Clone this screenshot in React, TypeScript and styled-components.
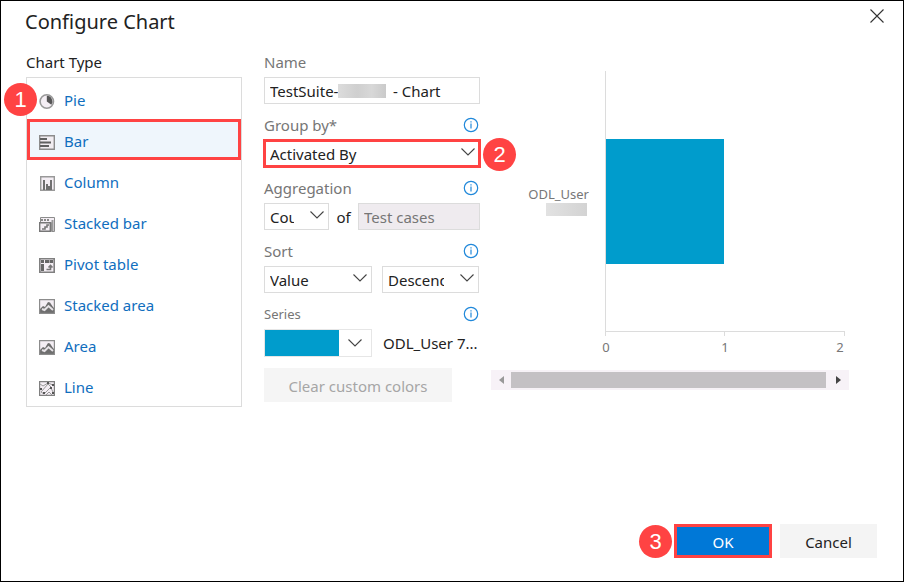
import React, { useState } from "react";
import styled, { createGlobalStyle } from "styled-components";

const RED = "#ff4343";

const Global = createGlobalStyle`
  *, *::before, *::after { box-sizing: border-box; }
  body { margin: 0; background: #fff; }
  body, button, input, select { font-family: "Noto Sans", "Open Sans", sans-serif; font-size: 15px; }
`;

const Dialog = styled.main`
  display: flex;
  flex-direction: column;
  min-height: 100vh;
  border: 1px solid #000;
  background: #fff;
  color: #222;
`;

const Header = styled.header`
  display: flex;
  justify-content: space-between;
  align-items: flex-start;
  padding: 6px 17px 0 24px;
`;

const Title = styled.h1`
  margin: 0;
  font-size: 20px;
  line-height: 30px;
  font-weight: 400;
`;

const CloseButton = styled.button`
  display: flex;
  padding: 1px;
  border: 0;
  background: none;
`;

const Body = styled.div`
  display: flex;
  flex: 1;
  align-items: flex-start;
  padding: 13px 54px 0 25px;
`;

const TypeColumn = styled.section`
  flex: 0 0 216px;
  margin-right: 22px;
`;

const FormColumn = styled.form`
  flex: 0 0 216px;
  min-width: 0;
  display: flex;
  flex-direction: column;
  gap: 9px;
  margin-right: 11px;
`;

const ChartColumn = styled.section`
  flex: 1;
  min-width: 0;
`;

const SectionTitle = styled.h2`
  margin: 0 0 3px;
  font-size: 15px;
  line-height: 24px;
  font-weight: 400;
`;

const TypeList = styled.ul`
  position: relative;
  margin: 0;
  padding: 0;
  list-style: none;
  border: 1px solid #dcdcdc;
`;

const TypeButton = styled.button<{ $selected: boolean }>`
  display: flex;
  align-items: center;
  gap: 9px;
  width: 100%;
  height: 41px;
  padding: 3px 12px 0;
  border: 0;
  background: ${(p) => (p.$selected ? "#eff6fc" : "transparent")};
  outline: ${(p) => (p.$selected ? `3px solid ${RED}` : "none")};
  outline-offset: -3px;
  color: #106ebe;
  text-align: left;
  > svg { margin-top: 3px; }
`;

const Badge = styled.span<{ $floating?: boolean }>`
  display: flex;
  align-items: center;
  justify-content: center;
  flex: none;
  width: 33px;
  height: 33px;
  border-radius: 50%;
  background: ${RED};
  color: #fff;
  font: 22px/33px "Liberation Sans", Arial, sans-serif;
  ${(p) => p.$floating && "position: absolute;"}
`;

const ListBadge = styled(Badge)`
  top: 5px;
  left: -23px;
`;

const FieldBadge = styled(Badge)`
  top: -2px;
  left: calc(100% + 3px);
`;

const Field = styled.div`
  display: flex;
  flex-direction: column;
  gap: 3px;
`;

const LabelRow = styled.div<{ $small?: boolean }>`
  display: flex;
  align-items: center;
  justify-content: space-between;
  height: 24px;
  color: #767676;
  font-size: ${(p) => (p.$small ? "13px" : "15px")};
`;

const InfoButton = styled.button`
  display: flex;
  padding: 0 1px 0 0;
  border: 0;
  background: none;
`;

const ControlRow = styled.div`
  position: relative;
  display: flex;
  align-items: center;
`;

const TextInput = styled.input`
  flex: 1;
  width: 100%;
  min-width: 0;
  height: 27px;
  padding: 0 5px;
  border: 1px solid #dcdcdc;
  background: #fff;
  color: #222;
  &:disabled { background: #efebef; color: #767676; }
`;

const Redaction = styled.span`
  position: absolute;
  left: 74px;
  top: 7px;
  width: 48px;
  height: 14px;
  background: linear-gradient(90deg, #dcdcdc, #cfcfcf 40%, #d8d8d8 70%, #cacaca);
`;

const SelectBox = styled.div<{ $width?: number; $marked?: boolean }>`
  display: grid;
  align-items: center;
  flex: ${(p) => (p.$width ? `0 0 ${p.$width}px` : "1")};
  height: 27px;
  border: 1px solid #dcdcdc;
  outline: ${(p) => (p.$marked ? `3px solid ${RED}` : "none")};
  outline-offset: -2px;
  > * { grid-area: 1 / 1; }
  > svg { justify-self: end; margin: 0 3px 4px 0; pointer-events: none; }
`;

const Select = styled.select`
  width: 100%;
  height: 25px;
  padding: 0 34px 0 5px;
  border: 0;
  appearance: none;
  background: transparent;
  color: #222;
  text-overflow: clip;
`;

const Between = styled.span`
  flex: 1;
  text-align: center;
`;

const ItemsBox = styled.div`
  display: flex;
  flex: 0 0 122px;
`;

const Spacer = styled.span`
  width: 10px;
`;

const ColorButton = styled.button`
  display: flex;
  align-items: center;
  flex: none;
  width: 108px;
  height: 28px;
  padding: 0;
  border: 1px solid #e6e6e6;
  background: #fff;
`;

const Swatch = styled.span`
  width: 74px;
  height: 26px;
  margin-right: 8px;
  background: #009ccc;
`;

const SeriesName = styled.span`
  margin-left: 11px;
  white-space: nowrap;
`;

const ClearButton = styled.button`
  width: 188px;
  height: 34px;
  margin-top: 2px;
  padding: 2px 0 0;
  border: 0;
  background: #f5f5f5;
  color: #a6a6a6;
`;

const ChartSvg = styled.svg`
  display: block;
  width: 100%;
  height: auto;
  font-family: "Noto Sans", sans-serif;
  font-size: 13px;
  fill: #777;
`;

const ScrollTrack = styled.div`
  display: flex;
  align-items: center;
  height: 20px;
  background: #f7f2f7;
`;

const ScrollButton = styled.button`
  display: flex;
  align-items: center;
  justify-content: center;
  width: 20px;
  height: 20px;
  padding: 0;
  border: 0;
  background: none;
`;

const ScrollThumb = styled.div`
  flex: 1;
  height: 16px;
  margin-right: 3px;
  background: #c4c1c4;
`;

const Footer = styled.footer`
  display: flex;
  align-items: center;
  justify-content: flex-end;
  padding: 0 26px 23px;
`;

const ActionButton = styled.button<{ $primary?: boolean }>`
  width: ${(p) => (p.$primary ? "98px" : "97px")};
  height: 34px;
  margin-left: ${(p) => (p.$primary ? "2px" : "8px")};
  padding: 2px 0 0;
  border: 0;
  background: ${(p) => (p.$primary ? "#0078d7" : "#f4f4f4")};
  color: ${(p) => (p.$primary ? "#fff" : "#222")};
  outline: ${(p) => (p.$primary ? `3px solid ${RED}` : "none")};
  outline-offset: -3px;
`;

const Chevron = () => (
  <svg width="16" height="10" viewBox="0 0 16 10" fill="none" stroke="#444" strokeWidth="1.1" aria-hidden="true">
    <path d="M1.5 1.5 8 8l6.5-6.5" />
  </svg>
);

const Info = ({ topic }: { topic: string }) => (
  <InfoButton type="button" aria-label={`About ${topic}`}>
    <svg width="16" height="16" viewBox="0 0 16 16" fill="none" stroke="#2088da" strokeWidth="1.2" aria-hidden="true">
      <circle cx="8" cy="8" r="6.7" />
      <path d="M8 6.5v5M8 4.2v1.2" />
    </svg>
  </InfoButton>
);

const areaShape = (
  <>
    <path fill="#f4eef4" d="M0 0h16v15H0z" />
    <path fill="#6e6e6e" d="M0 11 4 7l2 1 3-5 2 .5L14 8l2 2v5H0z" />
    <path fill="none" stroke="#e6e2e6" strokeWidth="2" d="m3 10 2.500 1L9.500 7l4.500 4" />
    <path fill="none" stroke="#8c8c8c" strokeWidth="1.2" d="M.6.6h14.8v13.8H.6z" />
  </>
);

const shapes: Record<string, React.ReactNode> = {
  Pie: (
    <>
      <circle cx="7.8" cy="7.5" r="6.7" fill="#f4eef4" stroke="#999" strokeWidth="1.6" />
      <path fill="#555" d="M7.8 7.5V1.8a5.7 5.7 0 0 1 4.6 9z" />
    </>
  ),
  Bar: (
    <>
      <path fill="#f1edf1" stroke="#8c8c8c" strokeWidth="1.4" d="M.7.7h14.6v13.6H.7z" />
      <path fill="#606060" d="M1 3h7v2H1zM1 6.5h11v2H1zM1 10h9v2H1z" />
    </>
  ),
  Column: (
    <>
      <path fill="#f4eef4" stroke="#999" strokeWidth="1.4" d="M1.7.7h13.6v13.6H1.7z" />
      <path fill="#707070" d="M4 4h2v10H4zM7 8h2v6H7zM9 10h2v4H9zM11 4h2v10h-2z" />
    </>
  ),
  "Stacked bar": (
    <>
      <path fill="#f4eef4" stroke="#8c8c8c" d="M1.5.5h14v14h-3v-9h-11z" />
      <path stroke="#888" strokeWidth="2" strokeDasharray="2 1" d="M2 3h9" />
      <path stroke="#999" strokeWidth="2" d="M13.500 3v11" />
      <path fill="#f4eef4" stroke="#777" strokeWidth="1.4" d="M.7 5.7h10.600v8.600H.7z" />
      <path fill="none" stroke="#777" strokeWidth="1.6" d="M3 12h3v-2h2V8h2" />
    </>
  ),
  "Pivot table": (
    <>
      <path fill="#f4eef4" stroke="#808080" strokeWidth="1.6" d="M.8.8h14.4v13.4H.8z" />
      <path fill="#666" d="M2 2h3v3H2zM6 2h4v3H6zM10.500 2H14v3h-3.500zM2 6h3v7H2z" />
      <path fill="none" stroke="#777" strokeWidth="1.6" d="M7.500 11.500h4V8M9.500 9.500l2-2 2 2" />
    </>
  ),
  "Stacked area": areaShape,
  Area: areaShape,
  Line: (
    <>
      <path fill="#f4eef4" stroke="#808080" strokeWidth="1.2" d="M.6.6h14.8v13.8H.6z" />
      <path fill="none" stroke="#999" d="m1 3 3 2 5-3 5 2M2 11l7-8 3 3-7 7zM12 7l3 6M7 14l3-3 3 3" />
      <path fill="#555" d="M1 7h2v2H1zM8 1h2v2H8zM13 3h2v2h-2zM4 11h2v2H4zM11 6h2v2h-2zM13 11h2v2h-2z" />
    </>
  ),
};

const chartTypes = ["Pie", "Bar", "Column", "Stacked bar", "Pivot table", "Stacked area", "Area", "Line"];

export default function App() {
  const [type, setType] = useState("Bar");
  return (
    <>
      <Global />
      <Dialog role="dialog" aria-labelledby="dialog-title">
        <Header>
          <Title id="dialog-title">Configure Chart</Title>
          <CloseButton type="button" aria-label="Close">
            <svg width="16" height="16" viewBox="0 0 16 16" stroke="#333" strokeWidth="1.1">
              <path d="m1.5 1.5 13 13M14.5 1.5l-13 13" />
            </svg>
          </CloseButton>
        </Header>
        <Body>
          <TypeColumn>
            <SectionTitle>Chart Type</SectionTitle>
            <TypeList>
              {chartTypes.map((name) => (
                <li key={name}>
                  <TypeButton
                    type="button"
                    $selected={name === type}
                    aria-pressed={name === type}
                    onClick={() => setType(name)}
                  >
                    <svg width="16" height="16" viewBox="0 0 16 16" aria-hidden="true">
                      {shapes[name]}
                    </svg>
                    {name}
                  </TypeButton>
                </li>
              ))}
              <ListBadge as="li" $floating>1</ListBadge>
            </TypeList>
          </TypeColumn>

          <FormColumn onSubmit={(e) => e.preventDefault()}>
            <Field>
              <LabelRow><label htmlFor="name">Name</label></LabelRow>
              <ControlRow>
                <TextInput id="name" defaultValue={"TestSuite-" + " ".repeat(13) + " - Chart"} />
                <Redaction />
              </ControlRow>
            </Field>
            <Field>
              <LabelRow><label htmlFor="group">Group by*</label><Info topic="group by" /></LabelRow>
              <ControlRow>
                <SelectBox $marked>
                  <Select id="group"><option>Activated By</option></Select>
                  <Chevron />
                </SelectBox>
                <FieldBadge $floating>2</FieldBadge>
              </ControlRow>
            </Field>
            <Field>
              <LabelRow><label htmlFor="aggregation">Aggregation</label><Info topic="aggregation" /></LabelRow>
              <ControlRow>
                <SelectBox $width={65}>
                  <Select id="aggregation"><option>Count</option></Select>
                  <Chevron />
                </SelectBox>
                <Between>of</Between>
                <ItemsBox>
                  <TextInput aria-label="Aggregated items" defaultValue="Test cases" disabled />
                </ItemsBox>
              </ControlRow>
            </Field>
            <Field>
              <LabelRow><label htmlFor="sort">Sort</label><Info topic="sort" /></LabelRow>
              <ControlRow>
                <SelectBox $width={108}>
                  <Select id="sort"><option>Value</option></Select>
                  <Chevron />
                </SelectBox>
                <Spacer />
                <SelectBox $width={97}>
                  <Select aria-label="Sort direction"><option>Descending</option></Select>
                  <Chevron />
                </SelectBox>
              </ControlRow>
            </Field>
            <Field>
              <LabelRow $small><span>Series</span><Info topic="series" /></LabelRow>
              <ControlRow>
                <ColorButton type="button" aria-label="Series color">
                  <Swatch />
                  <Chevron />
                </ColorButton>
                <SeriesName>ODL_User 7...</SeriesName>
              </ControlRow>
            </Field>
            <ClearButton type="button" disabled>Clear custom colors</ClearButton>
          </FormColumn>

          <ChartColumn>
            <ChartSvg viewBox="0 0 358 320" role="img" aria-label="Bar chart: ODL_User 1">
              <defs>
                <linearGradient id="mask">
                  <stop offset="0" stopColor="#e2e2e2" />
                  <stop offset="1" stopColor="#d3d3d3" />
                </linearGradient>
              </defs>
              <path d="M115 89h118v125H115z" fill="#009ccc" />
              <path d="M114.5 21v265M114 281.5h240M233.5 281v5M353.5 281v5" fill="none" stroke="#dcdcdc" />
              <text x="98" y="149" textAnchor="end">ODL_User</text>
              <path d="M55 153h41v13H55z" fill="url(#mask)" />
              <text x="115" y="302" textAnchor="middle">0</text>
              <text x="234" y="302" textAnchor="middle">1</text>
              <text x="349" y="302" textAnchor="middle">2</text>
            </ChartSvg>
            <ScrollTrack>
              <ScrollButton type="button" aria-label="Scroll left">
                <svg width="6" height="10" viewBox="0 0 6 10"><path fill="#999" d="M6 1v8L1 5z" /></svg>
              </ScrollButton>
              <ScrollThumb />
              <ScrollButton type="button" aria-label="Scroll right">
                <svg width="6" height="10" viewBox="0 0 6 10"><path fill="#444" d="M0 1v8l5-4z" /></svg>
              </ScrollButton>
            </ScrollTrack>
          </ChartColumn>
        </Body>
        <Footer>
          <Badge>3</Badge>
          <ActionButton type="button" $primary>OK</ActionButton>
          <ActionButton type="button">Cancel</ActionButton>
        </Footer>
      </Dialog>
    </>
  );
}
